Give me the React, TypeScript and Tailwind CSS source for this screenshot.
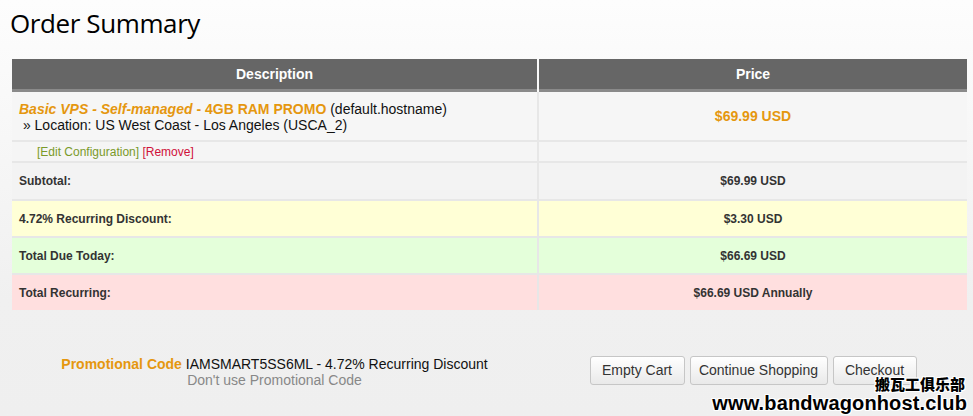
import React from "react";

const outline =
  "[text-shadow:1px_1px_0_#fff,-1px_-1px_0_#fff,1px_-1px_0_#fff,-1px_1px_0_#fff,0_1px_0_#fff,0_-1px_0_#fff,1px_0_0_#fff,-1px_0_0_#fff]";

function SummaryRow({
  label,
  value,
  bg,
  h,
}: {
  label: string;
  value: string;
  bg: string;
  h: string;
}) {
  return (
    <>
      <div className={`${bg} ${h} flex items-center pl-[7px] text-[12px] font-bold text-[#333]`}>{label}</div>
      <div className={`${bg} ${h} flex items-center justify-center text-[12px] font-bold text-[#333]`}>{value}</div>
    </>
  );
}

export default function App() {
  return (
    <div className="relative w-[973px] h-[416px] overflow-hidden bg-[linear-gradient(to_bottom,#fdfdfd_0px,#f0f0f0_300px,#efefef_416px)] font-['Liberation_Sans',Arial,sans-serif]">
      <div className="pl-[12px] pr-[6px]">
        <h1 className="-ml-[2px] mt-[7px] text-[26px] leading-[32px] font-['Open_Sans',sans-serif] font-normal tracking-[-0.4px] text-black">
          Order Summary
        </h1>

        <div className="mt-[20px]">
          <div className="grid grid-cols-[525px_428px] gap-x-[2px]">
            <div className="h-[33px] bg-[#666] border-b-[3px] border-[#8a8a8a] flex items-center justify-center text-white text-[14px] font-bold">
              Description
            </div>
            <div className="h-[33px] bg-[#666] border-b-[3px] border-[#8a8a8a] flex items-center justify-center text-white text-[14px] font-bold">
              Price
            </div>
          </div>

          <div className="grid grid-cols-[525px_428px] gap-[2px] bg-[#e7e7e7]">
            <div className="h-[48px] bg-[#f6f6f6] pl-[7px] pt-[9px] text-[14px] leading-[16px] text-[#111]">
              <div>
                <span className="font-bold italic text-[#e5970f]">Basic VPS - Self-managed</span>
                <span className="font-bold text-[#e5970f]"> - 4GB RAM PROMO</span> (default.hostname)
              </div>
              <div>&nbsp;» Location: US West Coast - Los Angeles (USCA_2)</div>
            </div>
            <div className="h-[48px] bg-[#f6f6f6] flex items-center justify-center text-[14px] font-bold text-[#e5970f]">
              $69.99 USD
            </div>

            <div className="h-[19px] bg-[#f5f5f5] flex items-center pl-[25px] pt-[1px] text-[12px]">
              <span className="text-[#7a9a2a]">[Edit Configuration]</span>
              <span>&nbsp;</span>
              <span className="text-[#d0103a]">[Remove]</span>
            </div>
            <div className="h-[19px] bg-[#f5f5f5]" />

            <SummaryRow label="Subtotal:" value="$69.99 USD" bg="bg-[#f3f3f3]" h="h-[36px]" />
            <SummaryRow label="4.72% Recurring Discount:" value="$3.30 USD" bg="bg-[#ffffd6]" h="h-[35px]" />
            <SummaryRow label="Total Due Today:" value="$66.69 USD" bg="bg-[#e4ffda]" h="h-[35px]" />
            <SummaryRow label="Total Recurring:" value="$66.69 USD Annually" bg="bg-[#ffdfdf]" h="h-[35px]" />
          </div>
        </div>

        <div className="mt-[46px] grid grid-cols-[525px_428px] gap-x-[2px] items-start">
          <div className="text-center text-[14px] leading-[16px] text-[#111]">
            <div>
              <span className="font-bold text-[#e5970f]">Promotional Code</span> IAMSMART5SS6ML - 4.72% Recurring Discount
            </div>
            <div className="text-[#888]">Don&apos;t use Promotional Code</div>
          </div>
          <div className="flex justify-center gap-[5px]">
            {[
              ["Empty Cart", "w-[95px]"],
              ["Continue Shopping", "w-[138px]"],
              ["Checkout", "w-[84px]"],
            ].map(([t, w]) => (
              <button
                key={t}
                className={`${w} h-[29px] rounded-[3px] border border-[#c6c6c6] bg-linear-to-b from-[#ffffff] to-[#e9e9e9] text-[14px] text-[#333] flex items-center justify-center font-['Liberation_Sans',Arial,sans-serif]`}
              >
                {t}
              </button>
            ))}
          </div>
        </div>
      </div>

      <div className="absolute right-[6px] bottom-[3px] text-right text-black">
        <div
          className={`pr-[2px] font-['Noto_Sans_CJK_SC',sans-serif] font-black text-[15px] leading-[19px] ${outline}`}
        >
          搬瓦工俱乐部
        </div>
        <div className={`font-bold text-[20px] leading-[20px] tracking-[0.15px] ${outline}`}>www.bandwagonhost.club</div>
      </div>
    </div>
  );
}
